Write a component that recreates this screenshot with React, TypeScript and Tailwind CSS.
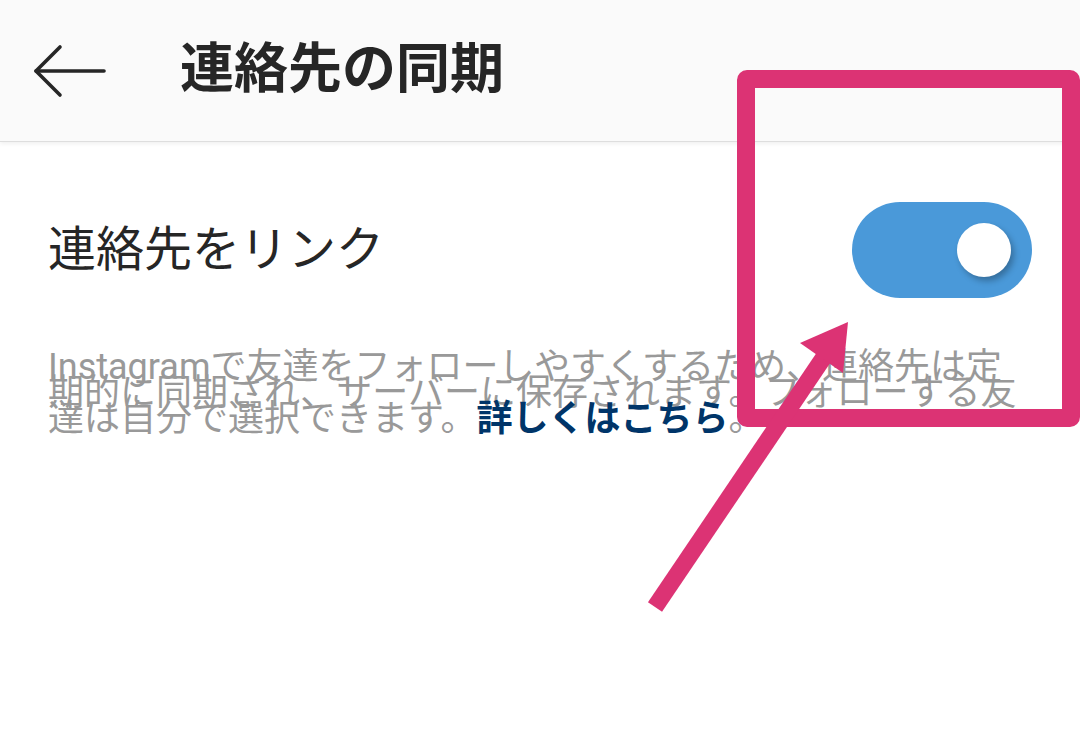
import { useState } from 'react'

const font = { fontFamily: "Roboto, 'Noto Sans CJK JP', sans-serif" }

function BackArrow() {
  return (
    <svg width="74" height="58" viewBox="0 0 74 58" fill="none" stroke="#262626" strokeWidth="3.6" strokeLinecap="round" strokeLinejoin="round">
      <path d="M3 29H71" />
      <path d="M27 5L3 29L27 53" />
    </svg>
  )
}

function Toggle({ on, onChange }: { on: boolean; onChange: () => void }) {
  return (
    <button
      onClick={onChange}
      className={`relative h-[96px] w-[180px] shrink-0 rounded-full ${on ? 'bg-[#4a99d9]' : 'bg-[#c7c7c7]'}`}
    >
      <span
        className={`absolute top-[21px] h-[54px] w-[54px] rounded-full bg-white shadow-[3px_4px_6px_rgba(0,0,0,0.28)] ${on ? 'left-[105px]' : 'left-[21px]'}`}
      />
    </button>
  )
}

export default function App() {
  const [linked, setLinked] = useState(true)

  return (
    <div className="relative h-[734px] w-[1080px] overflow-hidden bg-white text-[#262626]" style={font}>
      <header className="flex h-[142px] items-center border-b border-[#dedede] bg-[#fafafa] shadow-[0_2px_4px_rgba(0,0,0,0.06)]">
        <div className="ml-[33px] flex items-center">
          <BackArrow />
        </div>
        <h1 className="ml-[73px] mt-[-2px] text-[54px] font-bold leading-none">連絡先の同期</h1>
      </header>

      <main className="px-12">
        <div className="mt-[60px] flex h-[96px] items-center justify-between">
          <span className="text-[48px] leading-none">連絡先をリンク</span>
          <Toggle on={linked} onChange={() => setLinked(!linked)} />
        </div>

        <p className="mt-[56px] text-[36px] leading-[26px] text-[#999999]">
          Instagramで友達をフォローしやすくするため、連絡先は定
          <br />
          期的に同期され、サーバーに保存されます。フォローする友
          <br />
          達は自分で選択できます。
          <a className="font-bold text-[#003569]">詳しくはこちら</a>。
        </p>
      </main>

      {/* annotation overlay */}
      <div className="pointer-events-none absolute left-[737px] top-[70px] h-[357px] w-[343px] rounded-[10px] border-[18px] border-[#dc3374]" />
      <svg className="pointer-events-none absolute left-0 top-0" width="1080" height="734">
        <line x1="655" y1="607" x2="824" y2="357" stroke="#dc3374" strokeWidth="17" />
        <polygon points="848,322 800,343 843,373" fill="#dc3374" />
      </svg>
    </div>
  )
}
